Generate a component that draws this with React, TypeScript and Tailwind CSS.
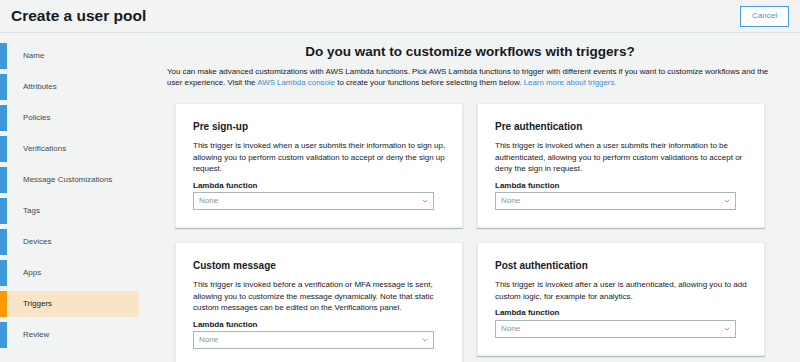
import React from "react";
import { ChevronDown } from "lucide-react";

const steps = [
  "Name",
  "Attributes",
  "Policies",
  "Verifications",
  "Message Customizations",
  "Tags",
  "Devices",
  "Apps",
  "Triggers",
  "Review",
];

const TriggerCard = ({ title, lines }: { title: string; lines: string[] }) => {
  return (
    <div className="bg-white border border-[#eaeded] shadow-[0_1px_1px_rgba(0,28,36,0.25)] pl-[17px] pr-[28px] pt-[16px] pb-[17px]">
      <h3 className="text-[10px] leading-[14px] font-bold text-[#16191f]">{title}</h3>
      <p className="mt-[6px] text-[8px] leading-[11.5px] text-[#16191f] whitespace-nowrap">
        {lines.map((line, i) => (
          <React.Fragment key={i}>
            {line}
            {i < lines.length - 1 && <br />}
          </React.Fragment>
        ))}
      </p>
      <div className="mt-[5px] text-[8px] leading-[11px] font-bold text-[#16191f]">Lambda function</div>
      <div className="mt-[1.5px] flex items-center justify-between h-[18px] border border-[#aab7b8] bg-white pl-[5px] pr-[4px]">
        <span className="text-[8px] text-[#879596]">None</span>
        <ChevronDown className="w-[8px] h-[8px] text-[#687078]" strokeWidth={2} />
      </div>
    </div>
  );
};

const App = () => {
  return (
    <div className="w-[800px] h-[362px] overflow-hidden bg-[#f2f3f3] font-['Liberation_Sans',Arial,sans-serif] text-[#16191f]">

      <header className="flex items-center justify-between h-[33px] border-b border-[#dfe2e2] pl-[11px] pr-[11px]">
        <h1 className="text-[15.5px] font-bold text-[#16191f]">Create a user pool</h1>
        <button className="w-[49px] h-[21px] border border-[#4a9be0] bg-white text-[8px] text-[#3f8fd2]">
          Cancel
        </button>
      </header>

      <div className="flex">
        <nav className="w-[139px] shrink-0 pt-[10px] flex flex-col gap-[5px]">
          {steps.map((step) => {
            const active = step === "Triggers";
            return (
              <div key={step} className={`flex items-center h-[26px] ${active ? "bg-[#f8e5c7]" : ""}`}>
                <div className={`w-[7px] h-full ${active ? "bg-[#ff9900]" : "bg-[#3d99d9]"}`} />
                <span className={`pl-[16px] text-[8px] ${active ? "text-[#16191f]" : "text-[#444b54]"}`}>{step}</span>
              </div>
            );
          })}
        </nav>

        <main className="ml-[28px] w-[606px] pt-[11px]">
          <h2 className="text-center text-[13.5px] leading-[16px] font-bold text-[#16191f]">
            Do you want to customize workflows with triggers?
          </h2>
          <p className="mt-[6px] text-[7.9px] leading-[11px] text-[#16191f] whitespace-nowrap">
            You can make advanced customizations with AWS Lambda functions. Pick AWS Lambda functions to trigger with different events if you want to customize workflows and the
            <br />
            user experience. Visit the <span className="text-[#3f8fd2]">AWS Lambda console</span> to create your functions before selecting them below.{" "}
            <span className="text-[#3f8fd2]">Learn more about triggers.</span>
          </p>

          <div className="mt-[15px] px-[8px] grid grid-cols-2 gap-[14px] items-start">
            <TriggerCard
              title="Pre sign-up"
              lines={[
                "This trigger is invoked when a user submits their information to sign up,",
                "allowing you to perform custom validation to accept or deny the sign up",
                "request.",
              ]}
            />
            <TriggerCard
              title="Pre authentication"
              lines={[
                "This trigger is invoked when a user submits their information to be",
                "authenticated, allowing you to perform custom validations to accept or",
                "deny the sign in request.",
              ]}
            />
            <TriggerCard
              title="Custom message"
              lines={[
                "This trigger is invoked before a verification or MFA message is sent,",
                "allowing you to customize the message dynamically. Note that static",
                "custom messages can be edited on the Verifications panel.",
              ]}
            />
            <TriggerCard
              title="Post authentication"
              lines={[
                "This trigger is invoked after a user is authenticated, allowing you to add",
                "custom logic, for example for analytics.",
              ]}
            />
          </div>
        </main>
      </div>

    </div>
  );
};

export default App;
